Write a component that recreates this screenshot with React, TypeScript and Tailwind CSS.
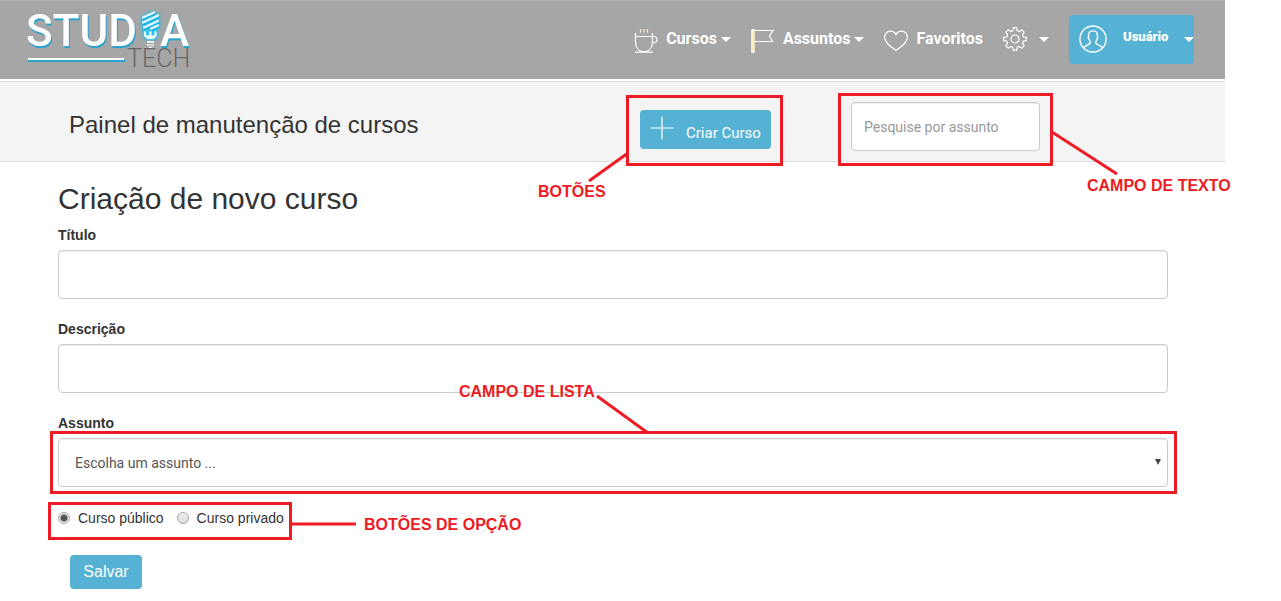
import type { ReactNode } from 'react';

const ROBOTO = "font-['Roboto','Liberation_Sans',sans-serif]";
const FIELD =
  'block h-[49px] w-full rounded border border-[#ccc] bg-white shadow-[inset_0_1px_1px_rgba(0,0,0,0.075)] outline-none focus:border-[#56b2d4]';

function Logo() {
  return (
    <svg width="172" height="76" viewBox="0 -8 172 76" role="img" aria-label="Studia Tech" className="block">
      <g className="font-['Roboto',sans-serif] drop-shadow-[1px_2px_0_#2ba3cc]" fontSize="44" fontWeight="500" fill="#fff">
        <text x="0" y="37">STUD</text>
        <text x="134" y="37">A</text>
      </g>
      <path d="M2 51.5H99" stroke="#2ba3cc" strokeWidth="3" />
      <path d="M2 50H98" stroke="#fff" strokeWidth="2" />
      <text x="101" y="58" fontSize="25" fontWeight="300" fill="#666" className="font-['Roboto',sans-serif]">
        TECH
      </text>
      <g className="drop-shadow-[0_0_2px_#19c5f6]">
        <g fill="none" strokeLinecap="round">
          <g stroke="#19b5e6" strokeWidth="3.6">
            <path d="M117 9.500l11-5M117 14.500l15-7M118 19.500l14-6.500M125 20.500l7-3" />
          </g>
          <g stroke="#e8fbff" strokeWidth="2.2">
            <path d="M117 8.500l11-5M117 13.500l15-7M118 18.500l14-6.500M125 19.500l7-3" />
          </g>
        </g>
        <path d="M117.500 22h3v4h2v-4h3.500v4h2v-4h3v5l-3.500 3.500h-6l-4-3.500z" fill="#f2fdff" stroke="#19c5f6" strokeWidth=".8" />
      </g>
      <path d="M121 32h7v4l-2 3h-3l-2-3z" fill="#eee" />
      <path d="M121 34.500h7M122 37h5" stroke="#999" strokeWidth="1" />
    </svg>
  );
}

function Line({ children, size = 24 }: { children: ReactNode; size?: number }) {
  return (
    <svg width={size} height={size} viewBox="0 0 24 24" fill="none" stroke="#fff" strokeWidth="1.2" aria-hidden="true" className="shrink-0">
      {children}
    </svg>
  );
}

function Caret() {
  return (
    <svg width="10" height="5" viewBox="0 0 10 5" fill="#fff" aria-hidden="true" className="shrink-0">
      <path d="M0 0h10L5 5z" />
    </svg>
  );
}

function CupIcon() {
  return (
    <Line>
      <path d="M1.500 4V13c0 5 3 8.500 6 9.500h5c3-1 6-4.500 6-9.500V4M1.500 7.500h17M1 23.200h18" />
      <path d="M19.500 7.500c2 0 3.500 1 3.500 3s-1.500 3.500-4.500 3.500" />
      <path d="M6.500 0v3.500M10 0v3.500M13.500 0v3.500" stroke="#f7edd9" />
    </Line>
  );
}

function FlagIcon() {
  return (
    <Line>
      <path d="M4 1.500h18l-3.500 5.500 3 5.500H4" />
      <path d="M2 1.500v21" stroke="#fff" strokeWidth="3.500" strokeLinecap="round" />
      <path d="M2.500 2v20" stroke="#fbe19a" strokeWidth="2" />
    </Line>
  );
}

function HeartIcon() {
  return (
    <Line>
      <path d="M12 21.500C7.500 18.500.6 13.500.6 8.200c0-3.400 2.500-6 5.800-6 2.400 0 4.400 1.300 5.600 3.400 1.200-2.100 3.200-3.400 5.600-3.400 3.300 0 5.800 2.600 5.800 6 0 5.300-6.900 10.300-11.400 13.300z" />
    </Line>
  );
}

function GearIcon() {
  return (
    <Line>
      <path
        strokeLinejoin="round"
        d="M10.300.7h3.400l.5 3.100 2 .8 2.600-1.800 2.400 2.400-1.800 2.600.8 2 3.100.5v3.400l-3.100.5-.8 2 1.800 2.600-2.400 2.400-2.600-1.800-2 .8-.5 3.100h-3.400l-.5-3.100-2-.8-2.600 1.800-2.400-2.400 1.800-2.600-.8-2-3.100-.5v-3.400l3.100-.5.8-2-1.800-2.600 2.400-2.400 2.600 1.800 2-.8z"
      />
      <circle cx="12" cy="12" r="4" />
    </Line>
  );
}

function UserIcon() {
  return (
    <Line size={28}>
      <circle cx="12" cy="12" r="11.200" />
      <path d="M4 19.500c1-2 5.500-2.500 5.800-4.300.1-.8-.9-1.300-1.200-3.200-.8-.4-.9-1.800-.3-2.300C7.800 6.500 9.300 5 12 5s4.200 1.500 3.700 4.700c.6.500.5 1.900-.3 2.300-.3 1.900-1.300 2.400-1.200 3.200.3 1.800 4.800 2.300 5.800 4.300" />
    </Line>
  );
}

function NavItem({ icon, label, caret }: { icon: ReactNode; label: string; caret?: boolean }) {
  return (
    <a href="#" className="flex items-center gap-2 text-base leading-6 font-bold text-white">
      <span className="pt-1">{icon}</span>
      <span className="flex items-center gap-1">
        {label}
        {caret && <Caret />}
      </span>
    </a>
  );
}

function Frame({ className }: { className: string }) {
  return <span aria-hidden="true" className={`pointer-events-none absolute border-3 border-[#ed1c24] ${className}`} />;
}

function Callout({ className, children }: { className: string; children: ReactNode }) {
  return (
    <span className={`pointer-events-none absolute whitespace-nowrap font-['Liberation_Sans',Arial,sans-serif] text-base leading-[22px] font-bold text-[#ed1c24] ${className}`}>
      {children}
    </span>
  );
}

function Pointer({ className, width, height, d }: { className: string; width: number; height: number; d: string }) {
  return (
    <svg width={width} height={height} viewBox={`0 0 ${width} ${height}`} stroke="#ed1c24" strokeWidth="3" aria-hidden="true" className={`pointer-events-none absolute max-w-none ${className}`}>
      <path d={d} />
    </svg>
  );
}

function TextField({ id, label }: { id: string; label: string }) {
  return (
    <div className="mb-5">
      <label htmlFor={id} className="mb-[5px] block text-sm leading-5 font-bold">
        {label}
      </label>
      <input id={id} type="text" className={`${FIELD} ${ROBOTO} px-3 text-sm`} />
    </div>
  );
}

function Radio({ id, label, checked }: { id: string; label: string; checked?: boolean }) {
  return (
    <div className="flex items-center gap-2">
      <input
        id={id}
        type="radio"
        name="visibilidade"
        defaultChecked={checked}
        className="size-3 shrink-0 appearance-none rounded-full border border-[#a8a8a8] bg-linear-to-b from-[#eee] to-[#ddd] checked:bg-[radial-gradient(circle,#555_0_3px,#e6e6e6_4px)]"
      />
      <label htmlFor={id} className="text-sm leading-5">
        {label}
      </label>
    </div>
  );
}

export default function App() {
  return (
    <div className="bg-white pr-14 font-['Liberation_Sans',Arial,sans-serif] text-[#333]">
      <header className="mb-0.5 flex h-[79px] items-center justify-between border-t border-[#b4b4b4] bg-[#a6a6a6] pr-[31px] pb-0.5 pl-[26px]">
        <Logo />
        <nav className={`flex items-center gap-5 ${ROBOTO}`}>
          <NavItem icon={<CupIcon />} label="Cursos" caret />
          <NavItem icon={<FlagIcon />} label="Assuntos" caret />
          <NavItem icon={<HeartIcon />} label="Favoritos" />
          <button type="button" aria-label="Configurações" className="flex items-center gap-3">
            <GearIcon />
            <Caret />
          </button>
          <button type="button" className="flex h-[49px] w-[125px] items-center rounded bg-[#56b2d4] pl-2.5 text-[13px] font-black text-white">
            <UserIcon />
            <span className="ml-4 pb-1">Usuário</span>
            <span className="ml-auto">
              <Caret />
            </span>
          </button>
        </nav>
      </header>

      <section className="flex h-[81px] items-center border-y border-[#ddd] bg-[#f4f4f4] pt-2.5 pr-[185px] pl-[69px]">
        <h1 className="flex-1 pb-[3px] text-2xl leading-8">Painel de manutenção de cursos</h1>
        <div className="relative mt-1.5">
          <button type="button" className={`flex h-[39px] w-[131px] items-center gap-3 rounded bg-[#56b2d4] pl-2.5 text-[15px] text-white ${ROBOTO}`}>
            <span className="pb-1">
              <Line>
                <path d="M12 .5v23M.5 12h23" />
              </Line>
            </span>
            <span className="pt-2">Criar Curso</span>
          </button>
          <Frame className="-top-[15px] -right-3 -bottom-[17px] -left-3.5" />
          <Pointer className="top-[41px] -left-[52px]" width={42} height={32} d="M1 30L40 2" />
          <Callout className="top-[71px] -left-[102px]">BOTÕES</Callout>
        </div>
        <div className="relative ml-20 w-[189px]">
          <input type="text" aria-label="Pesquise por assunto" placeholder="Pesquise por assunto" className={`${FIELD} ${ROBOTO} px-3 text-sm placeholder:text-[#999]`} />
          <Frame className="-top-[9px] -right-[13px] -bottom-[15px] -left-[13px]" />
          <Pointer className="top-[29px] left-[200px]" width={68} height={46} d="M1 1L66 43" />
          <Callout className="top-[73px] left-[236px]">CAMPO DE TEXTO</Callout>
        </div>
      </section>

      <main className="pt-5 pr-[57px] pl-[58px]">
        <h2 className="mb-2.5 text-[30px] leading-[33px]">Criação de novo curso</h2>
        <form onSubmit={(event) => event.preventDefault()}>
          <TextField id="titulo" label="Título" />
          <TextField id="descricao" label="Descrição" />

          <label htmlFor="assunto" className="mb-[5px] block text-sm leading-5 font-bold">
            Assunto
          </label>
          <div className="relative">
            <select id="assunto" className={`${FIELD} ${ROBOTO} appearance-none px-4 text-sm text-[#555]`}>
              <option>Escolha um assunto ...</option>
            </select>
            <svg width="6" height="6" viewBox="0 0 6 6" fill="#444" aria-hidden="true" className="pointer-events-none absolute top-[21px] right-[7px]">
              <path d="M0 0h6L3 6z" />
            </svg>
            <Frame className="-top-[7px] -right-[9px] -bottom-[7px] -left-2" />
            <Pointer className="-top-[43px] left-[538px]" width={56} height={40} d="M1 1L52 38" />
            <Callout className="-top-[57px] left-[401px]">CAMPO DE LISTA</Callout>
          </div>

          <div className="relative mt-[21px] flex w-fit gap-[13px]">
            <Radio id="publico" label="Curso público" checked />
            <Radio id="privado" label="Curso privado" />
            <Frame className="-top-1.5 -right-2 -bottom-3 -left-2.5" />
            <Pointer className="top-[14px] left-[234px]" width={64} height={4} d="M0 2H64" />
            <Callout className="top-1.5 left-[306px]">BOTÕES DE OPÇÃO</Callout>
          </div>

          <button type="submit" className="mt-[27px] ml-3 flex h-[34px] w-[72px] items-center justify-center rounded bg-[#56b2d4] text-base text-white">
            Salvar
          </button>
        </form>
      </main>
    </div>
  );
}
